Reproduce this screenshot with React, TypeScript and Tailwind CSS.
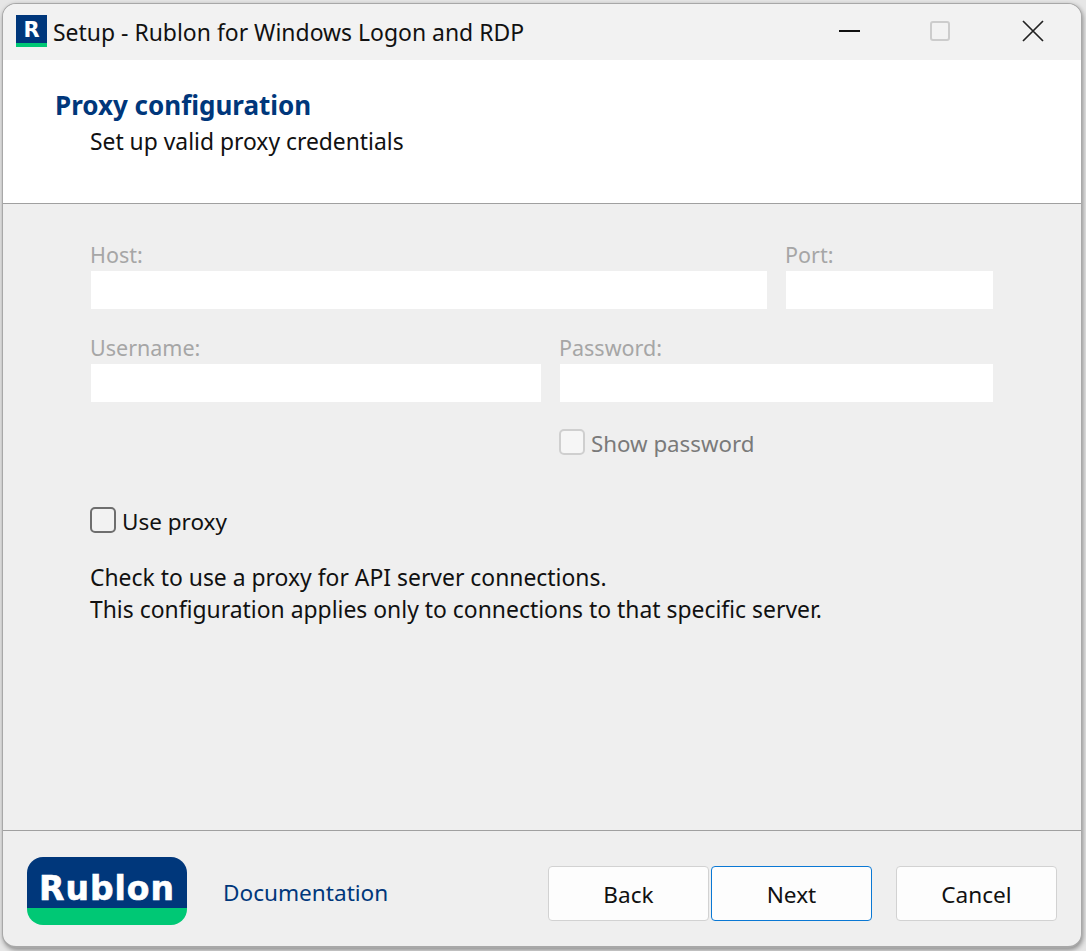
const font = { fontFamily: "'Noto Sans', sans-serif" };

function Field({ label, className }: { label: string; className: string }) {
  return (
    <div className={className}>
      <div className="-ml-[1px] h-[33px] text-[21.5px] leading-[34px] text-[#a6a6a6]">{label}</div>
      <div className="h-[38px] bg-white" />
    </div>
  );
}

function FooterButton({ label, primary }: { label: string; primary?: boolean }) {
  return (
    <button
      className={`h-[55px] w-[161px] rounded-[4px] border bg-[#fdfdfd] pt-[2px] text-[22.6px] text-[#111] ${
        primary ? 'border-[#0a78d4]' : 'border-[#d2d2d2]'
      }`}
    >
      {label}
    </button>
  );
}

export default function App() {
  return (
    <div className="h-[951px] w-[1086px] overflow-hidden bg-[#e6e6e6] pl-[2px] pt-[3px]" style={font}>
      <div className="flex h-[945px] w-[1080px] flex-col overflow-hidden rounded-[14px] border border-b-2 border-[#a8a8a8] bg-[#efefef] shadow-[1px_2px_5px_rgba(0,0,0,0.4)]">
        {/* title bar */}
        <div className="flex h-[56px] shrink-0 items-center bg-[#f2f2f2] pl-[13px]">
          <div className="mb-[2px] flex h-[32px] w-[31px] flex-col">
            <div className="flex h-[28px] items-center justify-center bg-[#00377b] pt-[2px] text-[21px] font-bold leading-none text-white" style={{ fontFamily: "'DejaVu Sans', sans-serif" }}>R</div>
            <div className="h-[4px] bg-[#00c875]" />
          </div>
          <span className="ml-[6px] pt-[1px] text-[22.95px] leading-none text-[#111]">Setup - Rublon for Windows Logon and RDP</span>
          <div className="ml-auto flex items-center pb-[2px] pr-[37px]">
            <div className="h-[2px] w-[21px] bg-[#111]" />
            <div className="ml-[70px] h-[20px] w-[20px] rounded-[3px] border-2 border-[#cccccc]" />
            <svg viewBox="0 0 22 22" className="ml-[72px] h-[22px] w-[22px] text-[#222]" fill="none" stroke="currentColor" strokeWidth="1.7">
              <path d="M1 1L21 21M21 1L1 21" />
            </svg>
          </div>
        </div>

        {/* header */}
        <div className="h-[144px] shrink-0 border-b border-[#a0a0a0] bg-white pl-[53px] pt-[27px]">
          <div className="-ml-[1px] text-[26px] font-bold leading-[36px] text-[#00377b]">Proxy configuration</div>
          <div className="mt-[1px] pl-[34px] text-[22.85px] leading-[36px] text-[#111]">Set up valid proxy credentials</div>
        </div>

        {/* form */}
        <div className="flex-1 pl-[87px] pr-[88px] pt-[34px]">
          <div className="ml-[1px] flex gap-[19px]">
            <Field label="Host:" className="w-[676px]" />
            <Field label="Port:" className="flex-1" />
          </div>
          <div className="ml-[1px] mt-[22px] flex gap-[19px]">
            <Field label="Username:" className="w-[450px]" />
            <Field label="Password:" className="flex-1" />
          </div>
          <div className="ml-[469px] mt-[27px] flex h-[26px] items-center gap-[6px]">
            <div className="h-[26px] w-[26px] rounded-[5px] border-2 border-[#cfcfcf] bg-[#f6f6f6]" />
            <span className="pt-[4px] text-[22.3px] text-[#7a7a7a]">Show password</span>
          </div>
          <div className="mt-[52px] flex h-[26px] items-center gap-[6px]">
            <div className="h-[26px] w-[26px] rounded-[5px] border-2 border-[#6e6e6e] bg-[#f2f2f2]" />
            <span className="pt-[4px] text-[22.5px] text-[#111]">Use proxy</span>
          </div>
          <div className="mt-[29px] text-[22.9px] leading-[32px] text-[#111]">
            <div>Check to use a proxy for API server connections.</div>
            <div>This configuration applies only to connections to that specific server.</div>
          </div>
        </div>

        {/* footer */}
        <div className="flex h-[116px] shrink-0 items-start border-t border-[#a0a0a0] pl-[24px] pr-[24px]">
          <div className="mt-[26px] flex h-[68px] w-[160px] flex-col overflow-hidden rounded-[16px]">
            <div className="flex h-[51px] items-center justify-center bg-[#00377b] pt-[12px] text-[33px] font-bold leading-none tracking-[1px] text-white [-webkit-text-stroke:0.6px_white]" style={{ fontFamily: "'DejaVu Sans', sans-serif" }}>Rublon</div>
            <div className="flex-1 bg-[#00c875]" />
          </div>
          <span className="ml-[36px] mt-[46px] text-[22.6px] leading-[32px] text-[#00377b]">Documentation</span>
          <div className="ml-auto mt-[35px] flex">
            <FooterButton label="Back" />
            <div className="ml-[2px]"><FooterButton label="Next" primary /></div>
            <div className="ml-[24px]"><FooterButton label="Cancel" /></div>
          </div>
        </div>
      </div>
    </div>
  );
}
